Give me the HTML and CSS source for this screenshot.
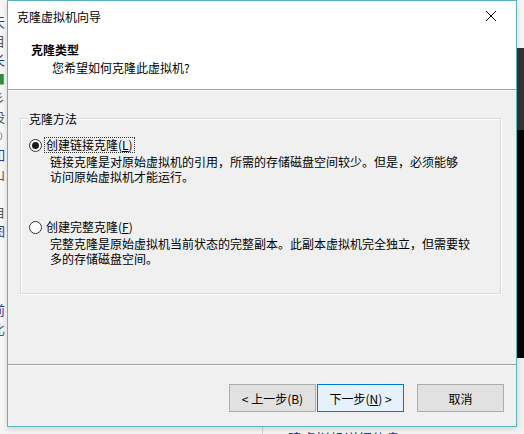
FILE: index.html
```html
<!DOCTYPE html>
<html lang="zh-CN">
<head>
    <meta charset="UTF-8">
    <meta name="viewport" content="width=device-width, initial-scale=1.0">
    <title>克隆虚拟机向导</title>
    <link rel="stylesheet" href="styles.css">
</head>
<body>
    <div class="desktop">
        <!-- bits of the windows behind the dialog -->
        <div class="behind-left">
            <span class="frag blue">天</span>
            <span class="frag">目</span>
            <span class="frag blue">长</span>
            <span class="frag green">■</span>
            <span class="frag">彡</span>
            <span class="frag">设</span>
            <span class="frag">©</span>
            <span class="frag blue">如</span>
            <span class="frag">山</span>
            <span class="frag">扌</span>
            <span class="frag">自</span>
            <span class="frag blue">图</span>
            <span class="frag gap blue">前</span>
            <span class="frag">比</span>
        </div>
        <div class="behind-right">
            <div class="br-light"></div>
            <div class="br-gray"></div>
            <div class="br-black"></div>
        </div>
        <div class="behind-bottom">
            <span class="bottom-line"></span>
            <span class="bottom-link">建虚拟机详细信息</span>
        </div>

        <div class="dialog">
            <div class="titlebar">
                <span class="title">克隆虚拟机向导</span>
                <span class="close">
                    <svg width="12" height="12" viewBox="0 0 12 12">
                        <path d="M1 1 L11 11 M11 1 L1 11" stroke="#000" stroke-width="1" fill="none"/>
                    </svg>
                </span>
            </div>
            <div class="header">
                <div class="header-title">克隆类型</div>
                <div class="header-sub">您希望如何克隆此虚拟机?</div>
            </div>
            <div class="content">
                <div class="group">
                    <span class="group-title">克隆方法</span>
                    <div class="option">
                        <div class="option-row">
                            <span class="radio checked"></span>
                            <span class="option-label focused">创建链接克隆(<u>L</u>)</span>
                        </div>
                        <div class="option-desc">链接克隆是对原始虚拟机的引用，所需的存储磁盘空间较少。但是，必须能够<br>访问原始虚拟机才能运行。</div>
                    </div>
                    <div class="option second">
                        <div class="option-row">
                            <span class="radio"></span>
                            <span class="option-label">创建完整克隆(<u>F</u>)</span>
                        </div>
                        <div class="option-desc">完整克隆是原始虚拟机当前状态的完整副本。此副本虚拟机完全独立，但需要较<br>多的存储磁盘空间。</div>
                    </div>
                </div>
            </div>
            <div class="footer">
                <button class="btn">&lt; 上一步(B)</button>
                <button class="btn primary">下一步(<u>N</u>) &gt;</button>
                <button class="btn cancel">取消</button>
            </div>
        </div>
    </div>
</body>
</html>
```

FILE: styles.css
```css
body {
    margin: 0;
    padding: 0;
    font-family: "Noto Sans CJK SC", "Noto Sans", sans-serif;
    font-size: 12px;
    color: #000;
    background-color: #f0f0f0;
}
.desktop {
    position: relative;
    width: 524px;
    height: 434px;
    overflow: hidden;
    background-color: #f2f2f2;
}

/* background windows */
.behind-left {
    position: absolute;
    left: 0;
    top: 0;
    width: 7px;
    height: 434px;
    overflow: hidden;
    background-color: #f7f7f7;
    display: flex;
    flex-direction: column;
    padding-top: 12px;
    box-sizing: border-box;
}
.frag {
    display: block;
    margin-left: -8px;
    line-height: 19px;
    font-size: 13px;
    color: #555;
}
.frag.blue {
    color: #2a3c8c;
}
.frag.green {
    color: #3a8a3a;
}
.frag.gap {
    margin-top: 60px;
}
.behind-right {
    position: absolute;
    left: 517px;
    top: 0;
    width: 7px;
    height: 434px;
    display: flex;
    flex-direction: column;
}
.br-light {
    height: 48px;
    background-color: #f7f7f7;
}
.br-gray {
    height: 82px;
    background-color: #333333;
}
.br-black {
    height: 228px;
    background-color: #050505;
}
.behind-bottom {
    position: absolute;
    left: 0;
    top: 427px;
    width: 524px;
    height: 7px;
    overflow: hidden;
    background-color: #f4f4f4;
}
.bottom-line {
    position: absolute;
    left: 262px;
    top: 0;
    width: 1px;
    height: 7px;
    background-color: #d0d0d0;
}
.bottom-link {
    position: absolute;
    left: 288px;
    top: 3px;
    font-size: 14px;
    line-height: 16px;
    color: #1f3b8f;
}

/* dialog */
.dialog {
    position: absolute;
    left: 7px;
    top: 0;
    width: 510px;
    height: 427px;
    box-sizing: border-box;
    border: 1px solid #5fb5bf;
    background-color: #f0f0f0;
    display: flex;
    flex-direction: column;
    box-shadow: 0 2px 6px rgba(0,0,0,0.15);
}
.titlebar {
    height: 30px;
    background-color: #fff;
    display: flex;
    align-items: center;
    justify-content: space-between;
    padding-left: 9px;
}
.title {
    line-height: 16px;
    margin-top: 1px;
}
.close {
    width: 46px;
    height: 30px;
    display: flex;
    align-items: center;
    justify-content: center;
    margin-right: 2px;
}
.header {
    height: 58px;
    background-color: #fff;
    border-bottom: 1px solid #a0a0a0;
    padding-left: 23px;
}
.header-title {
    font-weight: bold;
    line-height: 16px;
    margin-top: 11px;
}
.header-sub {
    line-height: 16px;
    margin-top: 2px;
    padding-left: 21px;
}
.content {
    height: 273px;
    border-top: 1px solid #fff;
    border-bottom: 1px solid #a0a0a0;
    padding-left: 12px;
}
.group {
    width: 481px;
    height: 176px;
    box-sizing: border-box;
    margin-top: 27px;
    border: 1px solid #dadada;
    box-shadow: inset 1px 1px 0 #fff, 1px 1px 0 #fff;
}
.group-title {
    display: block;
    width: max-content;
    margin-top: -7px;
    margin-left: 7px;
    padding: 0 1px;
    line-height: 14px;
    background-color: #f0f0f0;
}
.option {
    margin-top: 11px;
}
.option.second {
    margin-top: 35px;
}
.option-row {
    display: flex;
    align-items: center;
    height: 16px;
    padding-left: 8px;
}
.radio {
    width: 13px;
    height: 13px;
    box-sizing: border-box;
    border: 1px solid #333;
    border-radius: 50%;
    background-color: #fff;
    display: flex;
    align-items: center;
    justify-content: center;
}
.radio.checked::after {
    content: "";
    width: 7px;
    height: 7px;
    border-radius: 50%;
    background-color: #1a1a1a;
}
.option-label {
    margin-left: 2px;
    padding: 0 1px;
    line-height: 14px;
    border: 1px dotted transparent;
}
.option-label.focused {
    border-color: #333;
}
.option-desc {
    padding-left: 29px;
    line-height: 15px;
    margin-top: 1px;
}
.footer {
    flex: 1;
    border-top: 1px solid #fff;
    display: flex;
    align-items: flex-start;
    padding-top: 18px;
    padding-left: 221px;
}
.btn {
    width: 87px;
    height: 28px;
    box-sizing: border-box;
    border: 1px solid #adadad;
    background-color: #e1e1e1;
    font-family: "Noto Sans CJK SC", "Noto Sans", sans-serif;
    font-size: 12px;
    color: #000;
    padding: 0;
    margin: 0 1px 0 0;
}
.btn.primary {
    border-color: #0078d7;
    background-color: #e5f1fb;
}
.btn.cancel {
    margin-left: 12px;
}
```
